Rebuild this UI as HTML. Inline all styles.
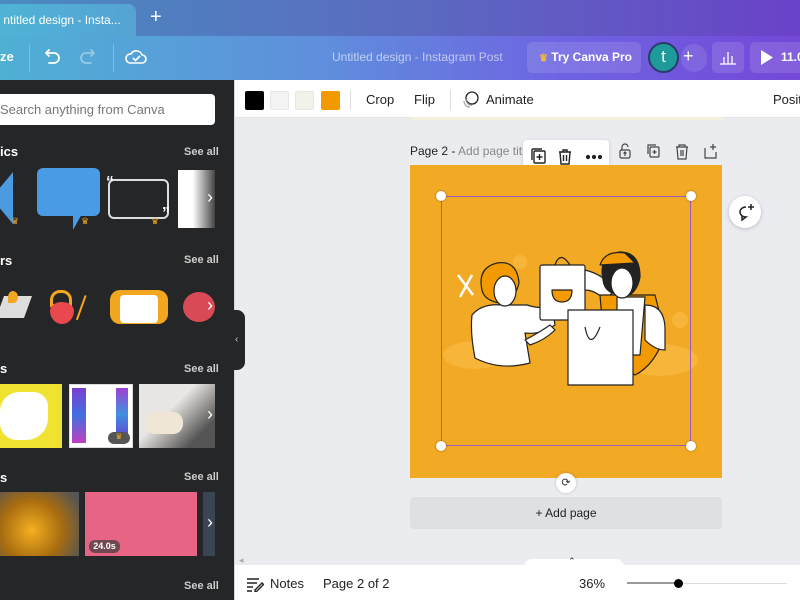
<!DOCTYPE html>
<html><head><meta charset="utf-8"><style>
*{box-sizing:border-box;margin:0;padding:0}
body{width:800px;height:600px;overflow:hidden;position:relative;font-family:"Liberation Sans",sans-serif;background:#ebecf0}
.abs{position:absolute}
.tabbar{left:0;top:0;width:800px;height:36px;background:linear-gradient(90deg,#4a8cbf 0%,#5a6cc0 50%,#6a42c8 100%)}
.tab{left:0;top:4px;width:136px;height:32px;background:linear-gradient(90deg,#4fb3d6,#55a3d4);border-radius:0 8px 0 0;color:#fff;font-size:12px;line-height:32px;padding-left:0}
.hdr{left:0;top:36px;width:800px;height:44px;background:linear-gradient(90deg,#4fb0d4 0%,#5f8fdc 40%,#6e64e2 70%,#7448d8 100%)}
.ht{color:#fff;font-size:13px;font-weight:bold}
.panel{left:0;top:80px;width:235px;height:520px;background:#252627}
.search{left:0;top:94px;width:215px;height:31px;background:#fff;border-radius:0 4px 4px 0;font-size:13px;color:#777;line-height:31px;padding-left:0}
.sh{color:#fff;font-size:13px;font-weight:bold}
.sa{color:#ccc;font-size:11px;font-weight:bold;left:184px}
.etb{left:235px;top:80px;width:565px;height:38px;background:#fff;border-bottom:1px solid #e5e5e5}
.sw{top:91px;width:19px;height:19px;border-radius:2px}
.et{color:#222;font-size:13px;top:92px}
.bot{left:235px;top:565px;width:565px;height:35px;background:#fff}
.bt{font-size:13px;color:#222;top:576px}
.arrow{color:#fff;font-size:18px;left:207px}
</style></head><body>
<div class="abs tabbar"></div>
<div class="abs tab">&nbsp;ntitled design - Insta... <span style="color:#cfe;margin-left:10px">×</span></div>
<div class="abs" style="left:150px;top:6px;color:#fff;font-size:20px">+</div>
<div class="abs hdr"></div>
<div class="abs ht" style="left:0;top:49px">ze</div>
<div class="abs" style="left:29px;top:44px;width:1px;height:28px;background:rgba(255,255,255,.25)"></div>
<svg class="abs" style="left:42px;top:48px" width="70" height="20" fill="none" stroke-width="1.8" stroke-linecap="round"><path d="M4 5h8a5 5 0 010 10H7M4 5l3-3M4 5l3 3" stroke="#fff"/><path d="M52 5h-8a5 5 0 000 10h5M52 5l-3-3M52 5l-3 3" stroke="rgba(255,255,255,.4)"/></svg>
<div class="abs" style="left:113px;top:44px;width:1px;height:28px;background:rgba(255,255,255,.25)"></div>
<svg class="abs" style="left:125px;top:48px" width="22" height="18" fill="none" stroke="#fff" stroke-width="1.6"><path d="M5 15h12a4 4 0 000-8 6 6 0 00-11-1 4.5 4.5 0 00-1 9z"/><path d="M8 10l2.5 2.5L15 8"/></svg>
<div class="abs" style="left:332px;top:50px;color:rgba(255,255,255,.6);font-size:12px">Untitled design - Instagram Post</div>
<div class="abs" style="left:527px;top:42px;width:114px;height:31px;background:rgba(255,255,255,.12);border-radius:5px"></div>
<div class="abs ht" style="left:539px;top:50px;font-size:12px"><span style="color:#f5b731;font-size:10px">♛</span> Try Canva Pro</div>
<div class="abs" style="left:681px;top:44px;width:26px;height:28px;background:rgba(255,255,255,.1);border-radius:14px"></div>
<div class="abs" style="left:648px;top:42px;width:31px;height:31px;border-radius:50%;background:#1f9a9a;border:2px solid #2a3d6a;color:#fff;font-size:17px;text-align:center;line-height:26px">t</div>
<div class="abs" style="left:683px;top:46px;color:#fff;font-size:18px">+</div>
<div class="abs" style="left:712px;top:42px;width:32px;height:31px;background:rgba(255,255,255,.12);border-radius:5px"></div>
<svg class="abs" style="left:719px;top:48px" width="18" height="18" stroke="#fff" stroke-width="1.3"><path d="M1 16h16M5 16V9M9 16V4M13 16V8"/></svg>
<div class="abs" style="left:750px;top:42px;width:60px;height:31px;background:rgba(255,255,255,.12);border-radius:5px"></div>
<svg class="abs" style="left:760px;top:50px" width="14" height="15"><path d="M1 0l12 7.5L1 15z" fill="#fff"/></svg>
<div class="abs ht" style="left:781px;top:50px;font-size:12px">11.0</div>

<div class="abs panel"></div>
<div class="abs search">Search anything from Canva</div>
<div class="abs sh" style="left:0;top:144px">ics</div><div class="abs sa" style="top:146px">See all</div>
<div class="abs sh" style="left:0;top:253px">rs</div><div class="abs sa" style="top:254px">See all</div>
<div class="abs sh" style="left:0;top:361px">s</div><div class="abs sa" style="top:363px">See all</div>
<div class="abs sh" style="left:0;top:470px">s</div><div class="abs sa" style="top:471px">See all</div>
<div class="abs sa" style="top:580px">See all</div>
<div class="abs" style="left:0;top:172px;width:13px;height:52px;background:#4a9be0;clip-path:polygon(0 30%,100% 0,100% 100%,0 70%)"></div>
<div class="abs" style="left:37px;top:168px;width:63px;height:48px;background:#4a9be6;border-radius:6px"></div>
<div class="abs" style="left:73px;top:212px;width:10px;height:18px;background:#4a9be6;clip-path:polygon(0 0,100% 0,0 100%)"></div>
<div class="abs" style="left:108px;top:179px;width:61px;height:40px;border:2px solid #ddd;border-radius:6px"></div>
<div class="abs" style="left:106px;top:174px;color:#fff;font-size:16px;font-weight:bold">“</div>
<div class="abs" style="left:162px;top:205px;color:#fff;font-size:16px;font-weight:bold">”</div>
<div class="abs" style="left:178px;top:170px;width:37px;height:58px;background:linear-gradient(90deg,#fff 40%,#444)"></div>
<div class="abs" style="left:11px;top:216px;color:#f1a820;font-size:9px">♛</div>
<div class="abs" style="left:81px;top:216px;color:#f1a820;font-size:9px">♛</div>
<div class="abs" style="left:151px;top:216px;color:#f1a820;font-size:9px">♛</div>
<div class="abs" style="left:0;top:296px;width:28px;height:22px;background:#ddd;transform:skewX(-20deg)"></div>
<div class="abs" style="left:8px;top:291px;width:10px;height:12px;background:#f1a820;border-radius:50% 50% 50% 0"></div>
<div class="abs" style="left:50px;top:290px;width:22px;height:17px;border:3px solid #f1a820;border-radius:10px 10px 0 0"></div>
<div class="abs" style="left:50px;top:302px;width:24px;height:22px;background:#e8484e;border-radius:50% 50% 50% 50%/40% 40% 60% 60%"></div>
<div class="abs" style="left:80px;top:296px;width:10px;height:26px;border-left:2px solid #f1a820;transform:rotate(20deg)"></div>
<div class="abs" style="left:110px;top:290px;width:58px;height:34px;background:#f1a820;border-radius:10px"></div>
<div class="abs" style="left:120px;top:295px;width:38px;height:28px;background:#fff;border-radius:4px"></div>
<div class="abs" style="left:183px;top:292px;width:32px;height:30px;background:#d94a57;border-radius:50%"></div>
<div class="abs" style="left:0;top:384px;width:62px;height:64px;background:#f0e230"></div>
<div class="abs" style="left:0;top:392px;width:48px;height:48px;background:#fff;border-radius:40% 30% 45% 35%"></div>
<div class="abs" style="left:69px;top:384px;width:64px;height:64px;background:#fff;border:1px solid #ddd"></div>
<div class="abs" style="left:72px;top:388px;width:14px;height:55px;background:linear-gradient(#7c3fd0,#4070e0,#c03fc0)"></div>
<div class="abs" style="left:116px;top:388px;width:12px;height:52px;background:linear-gradient(#a040d0,#4090e0,#6040d0)"></div>
<div class="abs" style="left:108px;top:432px;width:22px;height:12px;background:#555;border-radius:6px;color:#f1a820;font-size:8px;text-align:center">♛</div>
<div class="abs" style="left:139px;top:384px;width:76px;height:64px;background:linear-gradient(135deg,#e8e6e2 40%,#555 80%)"></div>
<div class="abs" style="left:145px;top:412px;width:38px;height:22px;background:#efe6d6;border-radius:10px"></div>
<div class="abs" style="left:0;top:492px;width:79px;height:64px;background:radial-gradient(circle at 40% 60%,#f4b020,#a86c10 50%,#555 90%)"></div>
<div class="abs" style="left:85px;top:492px;width:112px;height:64px;background:#e86484"></div>
<div class="abs" style="left:89px;top:540px;width:31px;height:13px;background:rgba(60,60,60,.7);border-radius:6px;color:#fff;font-size:9px;font-weight:bold;text-align:center;line-height:13px">24.0s</div>
<div class="abs" style="left:203px;top:492px;width:12px;height:64px;background:#3a4452"></div>
<div class="abs arrow" style="top:187px">›</div>
<div class="abs arrow" style="top:295px">›</div>
<div class="abs arrow" style="top:404px">›</div>
<div class="abs arrow" style="top:512px">›</div>
<div class="abs" style="left:234px;top:80px;width:1px;height:520px;background:#d5d6da"></div>
<div class="abs" style="left:233px;top:310px;width:12px;height:60px;background:#252627;border-radius:0 8px 8px 0;color:#ccc;font-size:10px;line-height:60px;padding-left:2px">‹</div>

<div class="abs etb"></div>
<div class="abs sw" style="left:245px;background:#000"></div>
<div class="abs sw" style="left:270px;background:#f3f3f3;border:1px solid #e6e6e6"></div>
<div class="abs sw" style="left:295px;background:#f2f1ea;border:1px solid #e6e6e6"></div>
<div class="abs sw" style="left:321px;background:#f29a00"></div>
<div class="abs" style="left:350px;top:90px;width:1px;height:20px;background:#ddd"></div>
<div class="abs et" style="left:366px">Crop</div>
<div class="abs et" style="left:414px">Flip</div>
<div class="abs" style="left:450px;top:90px;width:1px;height:20px;background:#ddd"></div>
<svg class="abs" style="left:461px;top:90px" width="18" height="20" fill="none" stroke="#222" stroke-width="1.3"><circle cx="11" cy="8" r="6"/><path d="M5 9a6 6 0 006 6" stroke="#888"/><path d="M3 11a6 6 0 006 6" stroke="#aaa"/></svg>
<div class="abs et" style="left:486px">Animate</div>
<div class="abs et" style="left:773px">Posit</div>
<div class="abs" style="left:410px;top:117px;width:312px;height:3px;background:#f4efd9"></div>

<div class="abs" style="left:410px;top:144px;font-size:12px;color:#222">Page 2 - <span style="color:#888">Add page titl</span></div>
<div class="abs" style="left:523px;top:140px;width:86px;height:32px;background:#fff;border-radius:4px;box-shadow:0 1px 4px rgba(0,0,0,.15)"></div>
<svg class="abs" style="left:530px;top:147px" width="75" height="18" fill="none" stroke="#222" stroke-width="1.4"><rect x="4" y="4" width="11" height="12" rx="1"/><path d="M2 13V3a1 1 0 011-1h9M9.5 7v6M6.5 10h6"/><path d="M29 5h12M33 5V3h4v2M30 5l1 12h8l1-12M33.5 8v6M36.5 8v6"/><circle cx="58" cy="10" r="1.4" fill="#222"/><circle cx="64" cy="10" r="1.4" fill="#222"/><circle cx="70" cy="10" r="1.4" fill="#222"/></svg>
<svg class="abs" style="left:617px;top:142px" width="104" height="18" fill="none" stroke="#444" stroke-width="1.2"><rect x="3" y="8" width="10" height="8" rx="1.5"/><path d="M5 8V5a3 3 0 016 0M8 14v-4M6.5 11.5L8 10l1.5 1.5"/><rect x="33" y="5" width="9" height="10" rx="1"/><path d="M31 12V3h8M37.5 8v4M35.5 10h4"/><path d="M59 5h12M62 5V3h6v2M60 5l1 12h8l1-12M64 8v6M66 8v6"/><path d="M88 6v10h11V10M96 2v6M93 5h6"/></svg>

<div class="abs" style="left:410px;top:165px;width:312px;height:313px;background:#f2a923"></div>
<svg class="abs" style="left:410px;top:165px" width="312" height="313">
 <g fill="#f7b53a"><circle cx="110" cy="97" r="7"/><circle cx="270" cy="155" r="8"/><ellipse cx="65" cy="190" rx="32" ry="14"/><ellipse cx="250" cy="195" rx="38" ry="16"/></g>
 <g stroke="#222" stroke-width="1.2" stroke-linejoin="round">
  <path d="M62 150q10-12 30-10l25 0q15 5 25 0l3 20q-15 10-30 8l5 30q-30 8-55 -5q-5-25-3-43z" fill="#fff"/>
  <path d="M72 125q-5-22 15-27q20-3 22 20q-5 20-20 20q-15-3-17-13z" fill="#f29a00"/>
  <ellipse cx="95" cy="126" rx="11" ry="15" fill="#fff"/>
  <path d="M115 175q15-8 25-15l5 5q-10 10-25 15z" fill="#fff"/>
  <rect x="130" y="100" width="45" height="55" rx="2" fill="#fff"/>
  <path d="M145 100q5-15 15 0" fill="none"/>
  <path d="M142 125h20q0 12-10 12q-10 0-10-12z" fill="#f29a00"/>
  <path d="M175 105q20 5 30 20l-10 10q-10-10-20-10z" fill="#fff"/>
  <path d="M190 130h55l10 40q-10 30-30 40l-30-20z" fill="#f29a00"/>
  <path d="M207 132h28l-5 58h-23z" fill="#fff"/>
  <path d="M235 140q20 0 20 25l0 20q-10 0-20-10z" fill="#fff"/>
  <path d="M193 115q-5-25 17-28q20 0 20 25q-2 12-10 18q-25 2-27-15z" fill="#222"/>
  <ellipse cx="212" cy="118" rx="11" ry="15" fill="#fff"/>
  <path d="M190 100q5-15 25-12l10 10z" fill="#f29a00"/>
  <path d="M158 145h65v75h-65z" fill="#fff"/>
  <path d="M175 162q5 25 15 0" fill="none"/>
  <path d="M48 110l15 20M62 110l-12 22" fill="none" stroke="#fff" stroke-width="2.5"/>
 </g>
</svg>
<div class="abs" style="left:441px;top:196px;width:250px;height:250px;border:1.5px solid #9a5ec0"></div>
<div class="abs" style="left:436px;top:191px;width:10px;height:10px;border-radius:50%;background:#fff;box-shadow:0 0 2px rgba(0,0,0,.4)"></div>
<div class="abs" style="left:686px;top:191px;width:10px;height:10px;border-radius:50%;background:#fff;box-shadow:0 0 2px rgba(0,0,0,.4)"></div>
<div class="abs" style="left:436px;top:441px;width:10px;height:10px;border-radius:50%;background:#fff;box-shadow:0 0 2px rgba(0,0,0,.4)"></div>
<div class="abs" style="left:686px;top:441px;width:10px;height:10px;border-radius:50%;background:#fff;box-shadow:0 0 2px rgba(0,0,0,.4)"></div>
<div class="abs" style="left:556px;top:473px;width:20px;height:20px;border-radius:50%;background:#fff;box-shadow:0 0 3px rgba(0,0,0,.2);font-size:11px;text-align:center;line-height:20px;color:#333">⟳</div>
<div class="abs" style="left:729px;top:196px;width:32px;height:32px;border-radius:50%;background:#fff;box-shadow:0 1px 4px rgba(0,0,0,.2)"></div>
<svg class="abs" style="left:736px;top:202px" width="20" height="20" fill="none" stroke="#222" stroke-width="1.5"><path d="M10 5a6 5 0 100 10l-4 3v-4"/><path d="M15 2v6M12 5h6"/></svg>
<div class="abs" style="left:410px;top:497px;width:312px;height:32px;background:#dfe0e4;border-radius:4px;text-align:center;line-height:32px;font-size:12px;color:#222">+ Add page</div>
<div class="abs" style="left:524px;top:559px;width:100px;height:10px;background:#fff;border-radius:8px 8px 0 0"></div>
<div class="abs" style="left:568px;top:556px;font-size:9px;color:#333">⌃</div>
<div class="abs" style="left:239px;top:555px;font-size:9px;color:#aaa">◂</div>
<div class="abs bot"></div>
<svg class="abs" style="left:246px;top:577px" width="18" height="15" fill="none" stroke="#222" stroke-width="1.4"><path d="M1 2h12M1 6h10M1 10h6M1 14h5M9 13l7-7 1.5 1.5-7 7H9z"/></svg>
<div class="abs bt" style="left:270px">Notes</div>
<div class="abs bt" style="left:323px">Page 2 of 2</div>
<div class="abs bt" style="left:579px">36%</div>
<div class="abs" style="left:627px;top:583px;width:160px;height:1px;background:#ddd"></div>
<div class="abs" style="left:627px;top:582px;width:50px;height:2px;background:#999"></div>
<div class="abs" style="left:674px;top:579px;width:9px;height:9px;border-radius:50%;background:#000"></div>
</body></html>
